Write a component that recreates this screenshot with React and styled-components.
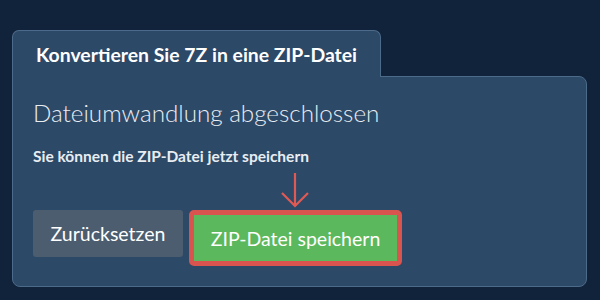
import React from "react";
import styled, { createGlobalStyle } from "styled-components";

const GlobalStyle = createGlobalStyle`
  html, body {
    margin: 0;
    padding: 0;
    background: #10233a;
    font-family: Lato, "Open Sans", sans-serif;
  }
`;

const Page = styled.div`
  width: 600px;
  height: 300px;
  padding: 30px 13px 0 12px;
  box-sizing: border-box;
  display: flex;
  flex-direction: column;
`;

const Tab = styled.div`
  align-self: flex-start;
  position: relative;
  z-index: 1;
  width: 369px;
  height: 47px;
  box-sizing: border-box;
  background: #2d4968;
  border: 1px solid #4c6a8a;
  border-bottom: none;
  border-radius: 7px 7px 0 0;
  margin-bottom: -1px;
  display: flex;
  align-items: center;
  padding-left: 23px;
  color: #ffffff;
  font-weight: 700;
  font-size: 19.4px;
`;

const Panel = styled.div`
  height: 211px;
  box-sizing: border-box;
  background: #2d4968;
  border: 1px solid #4c6a8a;
  border-radius: 0 8px 8px 8px;
  padding: 20px 20px 0 20px;
  color: #ffffff;
`;

const Heading = styled.h2`
  margin: 0;
  font-weight: 300;
  font-size: 24.2px;
  line-height: 32px;
  color: #e8edf2;
`;

const Note = styled.p`
  margin: 18px 0 0;
  font-weight: 700;
  font-size: 15.5px;
  line-height: 18px;
  color: #e8edf2;
`;

const Actions = styled.div`
  display: flex;
  align-items: flex-start;
  gap: 6px;
  margin-top: 45px;
`;

const Button = styled.button`
  font-family: inherit;
  border: none;
  color: #ffffff;
  font-size: 19.5px;
  cursor: pointer;
  box-sizing: border-box;
  padding: 0;
  ${(p) =>
    p.$primary
      ? `
    width: 213px;
    height: 56px;
    background: #5cb85c;
    border: 5px solid #d9534f;
    border-radius: 5px;
  `
      : `
    width: 150px;
    height: 47px;
    background: #4c5d6f;
    border-radius: 3px;
  `}
`;

const Highlight = styled.div`
  position: relative;
`;

const Arrow = styled.svg`
  position: absolute;
  left: 91px;
  top: -38px;
`;

export default function App() {
  return (
    <>
      <GlobalStyle />
      <Page>
        <Tab>Konvertieren Sie 7Z in eine ZIP-Datei</Tab>
        <Panel>
          <Heading>Dateiumwandlung abgeschlossen</Heading>
          <Note>Sie können die ZIP-Datei jetzt speichern</Note>
          <Actions>
            <Button>Zurücksetzen</Button>
            <Highlight>
              <Arrow width="30" height="36" viewBox="0 0 30 36">
                <path
                  d="M15 1 V34 M2 21 L15 34 L28 21"
                  fill="none"
                  stroke="#e05a54"
                  strokeWidth="2.2"
                />
              </Arrow>
              <Button $primary>ZIP-Datei speichern</Button>
            </Highlight>
          </Actions>
        </Panel>
      </Page>
    </>
  );
}
